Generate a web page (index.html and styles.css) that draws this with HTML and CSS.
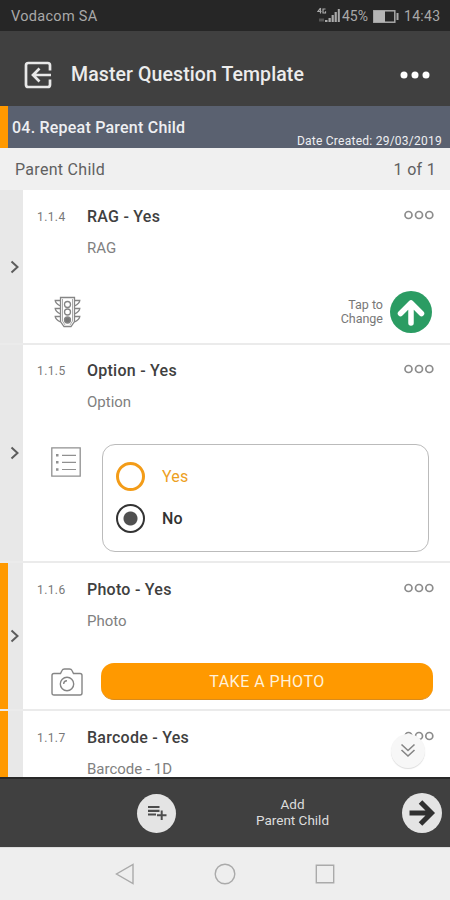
FILE: index.html
```html
<!DOCTYPE html>
<html lang="en">
<head>
<meta charset="utf-8">
<title>Master Question Template</title>
<link rel="stylesheet" href="styles.css">
</head>
<body>
<svg class="defs" width="0" height="0">
  <symbol id="dots" viewBox="0 0 30 10"><g fill="none" stroke="#8c8c8c" stroke-width="1.7"><circle cx="4.5" cy="5" r="3.5"/><circle cx="15" cy="5" r="3.5"/><circle cx="25.300" cy="5" r="3.500"/></g></symbol>
  <symbol id="chev" viewBox="0 0 10 14"><path d="M1.500 1.500 7.500 7 1.500 12.500" fill="none" stroke="#5c5c5c" stroke-width="2"/></symbol>
</svg>
<div class="screen">
  <div class="status">
    <span class="carrier">Vodacom SA</span>
    <svg class="signal" width="24" height="18" viewBox="0 0 24 18">
      <g fill="none" stroke="#aaa" stroke-width="1.200"><path d="M3.500 1 1 4.500h3.500M3.500 1v5.500M8.500 2H6v4h2.500V4.200"/></g>
      <path d="M2 13h5" stroke="#555" stroke-width="3"/>
      <g fill="#aaa"><path d="M8 13h2.500v2H8zM11.500 11h2.300v4h-2.300zM14.600 8h2.200v7h-2.200zM17.600 5h2.200v10h-2.200zM20.800 2h2v13h-2z"/></g>
    </svg>
    <span class="pct">45%</span>
    <svg class="battery" width="26" height="13" viewBox="0 0 26 13"><rect x=".8" y=".8" width="21" height="11.400" fill="none" stroke="#aaa" stroke-width="1.500"/><path d="M1 1h11v11H1z" fill="#b5b5b5"/><path d="M24.500 3v7" stroke="#aaa" stroke-width="2"/></svg>
    <span class="time">14:43</span>
  </div>
  <header class="appbar">
    <svg width="28" height="28" viewBox="0 0 28 28" fill="none" stroke="#e8e8e8" stroke-width="2.700"><path d="M26 9.500V4.300Q26 2 23.700 2H4.300Q2 2 2 4.300v19.400Q2 26 4.300 26h19.400q2.300 0 2.300-2.300v-5.200"/><path d="M27 14H9M15.500 7.500 9 14l6.500 6.500"/></svg>
    <h1>Master Question Template</h1>
    <svg class="more" width="30" height="8" viewBox="0 0 30 8" fill="#fff"><circle cx="4" cy="4" r="3.500"/><circle cx="15" cy="4" r="3.500"/><circle cx="26" cy="4" r="3.500"/></svg>
  </header>
  <div class="section">
    <h2>04. Repeat Parent Child</h2>
    <span class="created">Date Created: 29/03/2019</span>
  </div>
  <div class="group"><span>Parent Child</span><span class="count">1 of 1</span></div>

  <main class="list">
    <section class="row rag">
      <div class="rail"><svg width="10" height="14"><use href="#chev"/></svg></div>
      <div class="body">
        <div class="head"><span class="num">1.1.4</span><h3>RAG - Yes</h3><svg width="30" height="10"><use href="#dots"/></svg></div>
        <p>RAG</p>
        <div class="answer">
          <svg class="icon light" width="27" height="32" viewBox="0 0 27 32" fill="none" stroke="#858585" stroke-width="1.300"><path d="M6.500 1.500h14v24l-3.500 5h-7l-3.500-5z"/><path d="M8.500 3v22l2.500 4M18.500 3v22L16 29" stroke-width=".7"/><path d="M6.500 4.500H1.200q.3 3 5.300 5.500M6.500 12.500H1.200q.3 3 5.300 5.500M6.500 20.500H1.200q.3 3 5.300 5.500M20.500 4.500h5.300q-.3 3-5.300 5.500M20.500 12.500h5.300q-.3 3-5.300 5.500M20.500 20.500h5.300q-.3 3-5.300 5.500"/><circle cx="13.500" cy="8.500" r="3"/><circle cx="13.500" cy="16" r="3"/><circle cx="13.500" cy="24" r="3" fill="#777"/></svg>
          <div class="tap">Tap to<br>Change</div>
          <svg class="up" width="42" height="42" viewBox="0 0 42 42"><circle cx="21" cy="21" r="21" fill="#2b9c63"/><path d="M21 32V13M10.500 22.500 21 12l10.500 10.500" fill="none" stroke="#fff" stroke-width="5.500" stroke-linecap="round" stroke-linejoin="round"/></svg>
        </div>
      </div>
    </section>

    <section class="row option">
      <div class="rail"><svg width="10" height="14"><use href="#chev"/></svg></div>
      <div class="body">
        <div class="head"><span class="num">1.1.5</span><h3>Option - Yes</h3><svg width="30" height="10"><use href="#dots"/></svg></div>
        <p>Option</p>
        <div class="answer">
          <svg class="icon list-icon" width="30" height="30" viewBox="0 0 30 30" fill="none" stroke="#909090"><path d="M.8.800h28.400v28.400H.8z" stroke-width="1.300"/><path d="M11 8.300h14M11 15.300h14M11 22.500h14" stroke-width="1.200"/><path d="M5 8.300h2.500M5 15.300h2.500M5 22.500h2.500" stroke-width="2.500"/></svg>
          <div class="choices">
            <div class="choice yes"><i class="radio"></i>Yes</div>
            <div class="choice no"><i class="radio"></i>No</div>
          </div>
        </div>
      </div>
    </section>

    <section class="row photo flagged">
      <div class="rail"><svg width="10" height="14"><use href="#chev"/></svg></div>
      <div class="body">
        <div class="head"><span class="num">1.1.6</span><h3>Photo - Yes</h3><svg width="30" height="10"><use href="#dots"/></svg></div>
        <p>Photo</p>
        <div class="answer">
          <svg class="icon camera" width="32" height="28" viewBox="0 0 32 28" fill="none" stroke="#858585" stroke-width="1.400"><path d="M3 5.500h6.500l1.500-3Q11.700 1 13.500 1h5q1.800 0 2.500 1.500l1.500 3H29q2 0 2 2V25q0 2-2 2H3q-2 0-2-2V7.500q0-2 2-2z"/><circle cx="16" cy="16" r="6.700"/><path d="M12.700 16q0-3.300 3.300-3.300"/></svg>
          <button class="take">TAKE A PHOTO</button>
        </div>
      </div>
    </section>

    <section class="row barcode flagged">
      <div class="rail"></div>
      <div class="body">
        <div class="head"><span class="num">1.1.7</span><h3>Barcode - Yes</h3><svg width="30" height="10"><use href="#dots"/></svg></div>
        <p>Barcode - 1D</p>
      </div>
    </section>
    <div class="scroll-down"><svg width="16" height="15" viewBox="0 0 16 15" fill="none" stroke="#858585" stroke-width="1.600"><path d="M1.500 1.500 8 7.500l6.500-6M1.500 7 8 13l6.500-6"/></svg></div>
  </main>

  <footer class="actions">
    <div class="round add"><svg width="20" height="16" viewBox="0 0 20 16" fill="none" stroke="#4c4c4c"><path d="M1 2h11.500M1 5.800h11.500M1 9.500h8" stroke-width="2.200"/><path d="M14.700 5.500v9.500M10 10.200h9.500" stroke-width="2"/></svg></div>
    <div class="add-label">Add<br>Parent Child</div>
    <div class="round next"><svg width="28" height="28" viewBox="0 0 28 28" fill="none" stroke="#303030" stroke-width="5"><path d="M1.500 14H23M12.500 3 23.500 14 12.500 25"/></svg></div>
  </footer>
  <nav class="sysnav">
    <svg width="20" height="22" viewBox="0 0 20 22"><path d="M18 1.500v19L1.500 11z"/></svg>
    <svg width="22" height="22" viewBox="0 0 22 22"><circle cx="11" cy="11" r="9.800"/></svg>
    <svg width="20" height="20" viewBox="0 0 20 20"><path d="M1.300 1.300h17.400v17.400H1.300z"/></svg>
  </nav>
</div>
</body>
</html>
```

FILE: styles.css
```css
* { box-sizing: border-box; }
body { margin: 0; font-family: Roboto, sans-serif; }
h1, h2, h3, p { margin: 0; }
svg { display: block; flex: none; }
.defs { position: absolute; }
.screen { width: 450px; height: 900px; display: flex; flex-direction: column; overflow: hidden; background: #fff; }

.status { height: 31px; flex: none; background: #262626; color: #a9a9a9; display: flex; align-items: center; padding: 1px 9px 0 11px; font-size: 14px; }
.carrier { margin-right: auto; font-size: 14.500px; letter-spacing: .3px; }
.signal { margin-right: 1px; }
.pct { width: 31px; letter-spacing: 0; }
.battery { margin-right: 5px; }
.time { width: 37px; letter-spacing: .3px; }

.appbar { height: 75px; flex: none; background: #404040; display: flex; align-items: center; padding: 12px 20px 0 24px; color: #ececec; }
.appbar h1 { flex: 1; margin-left: 19px; font-size: 19.500px; font-weight: 500; letter-spacing: .1px; white-space: nowrap; }

.section { height: 42px; flex: none; background: #5a6170; border-left: 8px solid #ff9900; display: flex; color: #eeeff2; padding: 0 8px 0 4px; justify-content: space-between; }
.section h2 { font-size: 16px; font-weight: 500; letter-spacing: .22px; line-height: 44px; white-space: nowrap; }
.created { font-size: 12px; line-height: 14px; height: 14px; margin-top: 28px; letter-spacing: .25px; white-space: nowrap; }

.group { height: 42px; flex: none; background: #f0f0f0; color: #606060; display: flex; justify-content: space-between; padding: 0 14px 0 15px; line-height: 43px; font-size: 16px; letter-spacing: .3px; }

.list { height: 587px; flex: none; overflow: hidden; position: relative; }
.row { display: flex; border-bottom: 2px solid #ebebeb; }
.rag { height: 155px; }
.option { height: 218px; }
.photo { height: 148px; }
.barcode { height: 66px; border-bottom: 0; }
.rail { width: 23px; flex: none; background: #e8e8e8; display: flex; align-items: center; justify-content: flex-end; padding-right: 3px; }
.flagged .rail { border-left: 8px solid #ff9900; }
.body { flex: 1; min-width: 0; padding-top: 16px; display: flex; flex-direction: column; }
.option .body { padding-top: 15px; }
.head { height: 20px; flex: none; display: flex; align-items: center; padding: 0 16px 0 14px; }
.head svg { margin-top: -2px; }
.num { width: 50px; font-size: 12px; color: #787878; letter-spacing: .4px; padding-top: 2px; }
h3 { flex: 1; font-size: 16px; font-weight: 500; letter-spacing: .25px; color: #404040; }
p { margin: 12px 0 0 64px; height: 20px; line-height: 21px; font-size: 15px; color: #808080; flex: none; }
.answer { display: flex; }
.rag .answer { padding: 33px 18px 0 31px; align-items: center; }
.tap { margin-left: auto; margin-right: 7px; font-size: 12.500px; line-height: 14.500px; color: #777; text-align: right; }
.option .answer { padding: 32px 21px 0 28px; }
.list-icon { margin-top: 3px; }
.choices { flex: 1; height: 108px; margin-left: 21px; border: 1.500px solid #bbb; border-radius: 13px; padding: 10px 0 0 13px; }
.choice { height: 42px; display: flex; align-items: center; gap: 17px; font-size: 16px; letter-spacing: .2px; color: #eda022; }
.radio { width: 29px; height: 29px; border: 3px solid #f39c18; border-radius: 50%; }
.no { color: #333; font-weight: 500; }
.no .radio { border-color: #333; border-width: 2.500px; background: radial-gradient(circle, #505050 6.500px, #fff 7.500px); }
.photo .answer { padding: 32px 17px 0 28px; }
.camera { margin-top: 5px; }
.take { flex: 1; margin-left: 18px; height: 37px; border: 0; border-bottom: 1px solid #d98b1c; border-radius: 13px; background: #ff9900; color: #fff1da; font: 16px Roboto, sans-serif; letter-spacing: .5px; }
.scroll-down { position: absolute; right: 25px; top: 544px; width: 34px; height: 34px; border-radius: 50%; background: #f7f7f7; box-shadow: 0 1px 1px #ddd; display: flex; align-items: center; justify-content: center; padding-bottom: 2px; }

.actions { height: 70px; flex: none; background: #404040; border-top: 2px solid #282828; display: flex; align-items: center; padding: 0 8px 0 137px; }
.round { width: 39px; height: 39px; border-radius: 50%; background: #e4e4e4; display: flex; align-items: center; justify-content: center; flex: none; }
.next { width: 40px; height: 40px; }
.add-label { flex: 1; text-align: center; color: #ddd; font-size: 13.500px; line-height: 16px; padding-left: 7px; padding-bottom: 3px; }
.sysnav { flex: 1; background: #eee; border-top: 1px solid #ddd; display: flex; align-items: center; justify-content: center; gap: 79px; fill: none; stroke: #aaa; stroke-width: 1.400; }
```
